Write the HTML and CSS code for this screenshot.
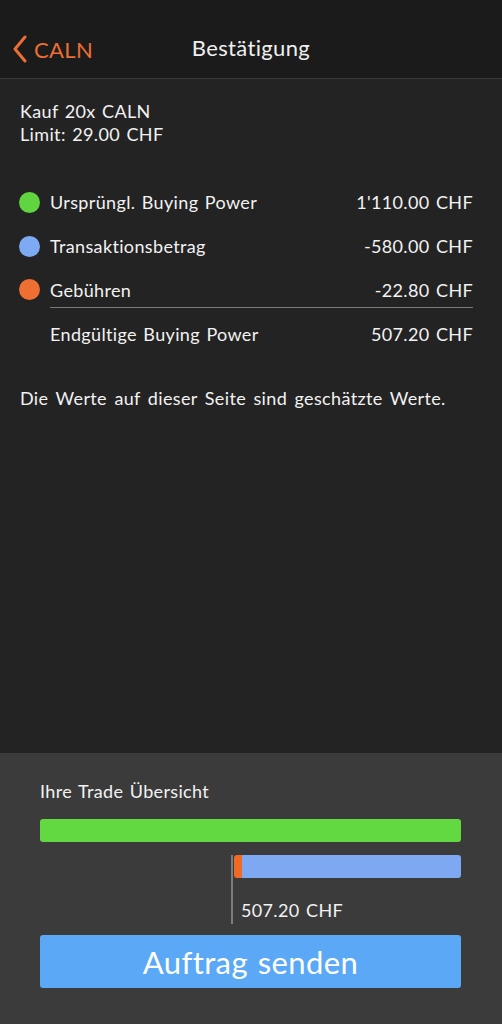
FILE: index.html
```html
<!DOCTYPE html>
<html lang="de">
<head>
<meta charset="utf-8">
<title>Bestätigung</title>
<link rel="stylesheet" href="styles.css">
</head>
<body>
<div class="app">
  <header class="nav">
    <div class="back">
      <svg class="chev" width="16" height="28" viewBox="0 0 16 28"><path d="M13 2 L3 14 L13 26" fill="none" stroke="#ec6e34" stroke-width="3" stroke-linecap="round" stroke-linejoin="round"/></svg>
      <span>CALN</span>
    </div>
    <div class="title">Bestätigung</div>
  </header>
  <main class="content">
    <div class="order">
      <div>Kauf 20x CALN</div>
      <div>Limit: 29.00 CHF</div>
    </div>
    <div class="rows">
      <div class="row"><span class="dot green"></span><span class="label">Ursprüngl. Buying Power</span><span class="val">1'110.00 CHF</span></div>
      <div class="row"><span class="dot blue"></span><span class="label">Transaktionsbetrag</span><span class="val">-580.00 CHF</span></div>
      <div class="row last"><span class="dot orange"></span><span class="label">Gebühren</span><span class="val">-22.80 CHF</span></div>
      <div class="row total"><span class="label">Endgültige Buying Power</span><span class="val">507.20 CHF</span></div>
    </div>
    <p class="note">Die Werte auf dieser Seite sind geschätzte Werte.</p>
  </main>
  <section class="panel">
    <div class="ptitle">Ihre Trade Übersicht</div>
    <div class="bar gbar"></div>
    <div class="split">
      <div class="spacer"></div>
      <div class="right">
        <div class="bar2"><span class="fee"></span><span class="tx"></span></div>
        <div class="rem">507.20 CHF</div>
      </div>
    </div>
    <button class="send">Auftrag senden</button>
  </section>
</div>
</body>
</html>
```
FILE: styles.css
```css
* { box-sizing: border-box; }
html, body { margin: 0; padding: 0; }
body {
  background: #232323;
  font-family: Lato, "Open Sans", sans-serif;
  color: #f2f2f2;
  letter-spacing: 0.35px;
  word-spacing: 1.5px;
}
.app {
  width: 502px;
  height: 1024px;
  display: flex;
  flex-direction: column;
  overflow: hidden;
}
.nav {
  height: 79px;
  flex: none;
  background: #1b1b1b;
  border-bottom: 1px solid #383838;
  position: relative;
  display: flex;
  align-items: center;
  justify-content: center;
  padding-top: 17px;
}
.back {
  position: absolute;
  left: 12px;
  top: 35px;
  display: flex;
  align-items: center;
  gap: 6px;
  color: #ec6e34;
  font-size: 22px;
}
.chev { display: block; }
.title {
  font-size: 22px;
  color: #efefef;
}
.content {
  flex: 1;
  padding: 21px 29px 0 20px;
}
.order {
  font-size: 18px;
  line-height: 23px;
}
.rows {
  margin-top: 34px;
}
.row {
  display: flex;
  align-items: center;
  height: 44px;
  font-size: 18px;
}
.row.last {
  height: 40px;
  padding-top: 4px;
  border-bottom: 1px solid #7a7a7a;
  margin-left: 30px;
}
.row.last .dot { margin-left: -31px; }
.row.total {
  height: 51px;
  padding-left: 30px;
}
.dot {
  width: 21px;
  height: 21px;
  border-radius: 50%;
  flex: none;
  margin-left: -1px;
  margin-right: 10px;
}
.green { background: #61d540; }
.blue { background: #7eaaf3; }
.orange { background: #ee6f31; }
.label { flex: 1; }
.val { text-align: right; }
.note {
  margin: 28px 0 0 0;
  font-size: 18px;
  word-spacing: 2.5px;
}
.panel {
  height: 271px;
  flex: none;
  background: #3b3b3b;
  padding: 27px 41px 0 40px;
}
.ptitle {
  font-size: 18px;
  height: 39px;
}
.bar {
  height: 23px;
  border-radius: 3px;
}
.gbar { background: #62d841; }
.split {
  display: flex;
  margin-top: 13px;
}
.spacer { width: 191px; flex: none; }
.right {
  flex: 1;
  border-left: 2px solid #7c7c7c;
  height: 69px;
}
.bar2 {
  display: flex;
  height: 23px;
  margin-left: 1px;
}
.fee {
  width: 8px;
  background: #ee6a25;
  border-radius: 3px 0 0 3px;
}
.tx {
  flex: 1;
  background: #7ea9f2;
  border-radius: 0 3px 3px 0;
}
.rem {
  font-size: 18px;
  margin-top: 21px;
  padding-left: 8px;
}
.send {
  display: block;
  width: 100%;
  height: 53px;
  margin-top: 11px;
  border: none;
  border-radius: 3px;
  background: #5aa8f6;
  color: #ffffff;
  font-family: Lato, "Open Sans", sans-serif;
  font-size: 31px;
  letter-spacing: 0.4px;
  word-spacing: 1.5px;
  padding: 0;
}
```
